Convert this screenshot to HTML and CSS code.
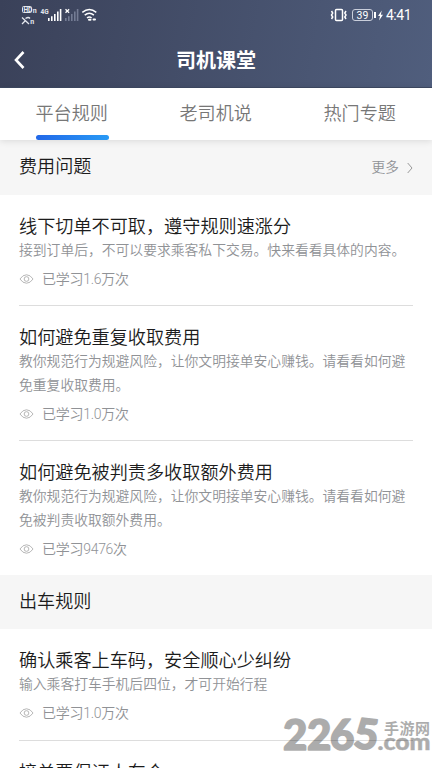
FILE: index.html
```html
<!DOCTYPE html>
<html lang="zh-CN">
<head>
<meta charset="utf-8">
<title>司机课堂</title>
<link rel="stylesheet" href="styles.css">
</head>
<body>
<svg class="defs" width="0" height="0">
  <symbol id="eye" viewBox="0 0 16 12"><path d="M1 6Q4 1.500 8 1.500T15 6Q12 10.500 8 10.500T1 6Z"/><circle cx="8" cy="6" r="2.500"/></symbol>
</svg>
<header class="header">
  <div class="status">
    <svg class="status-left" width="100" height="26" viewBox="0 0 100 26">
      <rect x="22.500" y="6.500" width="9" height="6" rx="1" fill="none" stroke="#e4e7ee"/>
      <text x="23.400" y="12" font-size="6.500" font-weight="700">HD</text>
      <text x="32.800" y="13" font-size="7" font-weight="700">n</text>
      <path d="M22 17.500l7 6.500M22 24l3-3M25.500 18.500q3-2 4.500 0" fill="none" stroke="#e4e7ee" stroke-width="1.300"/>
      <text x="30.300" y="24" font-size="7" font-weight="700">n</text>
      <text x="40.500" y="13.500" font-size="6.500" font-weight="700">4G</text>
      <path d="M48 18h1.600v3H48zM51 16.300h1.600V21H51zM54 14h1.600v7H54zM57 11.500h1.600V21H57zM59.800 9h1.600v12h-1.600z" fill="#fff"/>
      <path d="M65 18h1.600v3H65zM68 16.300h1.600V21H68zM71 14h1.600v7H71zM74 11.500h1.600V21H74zM76.800 9h1.600v12h-1.600z" fill="#747c94"/>
      <path d="M65.500 9.200l3.600 3.600m0-3.600l-3.600 3.600" stroke="#fff" stroke-width="1.300"/>
      <path d="M82.300 12.300q7-5.500 14 0M84.700 15.200q4.600-3.800 9.200 0M87 18q2.300-1.800 4.600 0" fill="none" stroke="#fff" stroke-width="1.500"/>
      <path d="M89 19.800h1.500M93.500 19.500h1.500" stroke="#fff" stroke-width="2" stroke-linecap="round"/>
    </svg>
    <div class="status-right">
      <svg width="18" height="14" viewBox="0 0 18 14" fill="none" stroke="#fff">
        <rect x="5.500" y="1.500" width="7" height="11" rx="1" stroke-width="1.500"/>
        <path d="M1.500 3l1.200 2-1.200 2 1.200 2-1.200 2M16 3l-1.200 2L16 7l-1.200 2L16 11" stroke-width="1.500"/>
      </svg>
      <span class="battery">39</span>
      <svg class="bolt" width="5" height="11" viewBox="0 0 6 12"><path d="M4.500 0L0 6.500h2.400L1.300 12 6 5H3.400z" fill="#fff"/></svg>
      <span class="clock">4:41</span>
    </div>
  </div>
  <div class="navbar">
    <svg class="back" width="12" height="20" viewBox="0 0 12 20"><path d="M10.500 2L3 10l7.500 8" fill="none" stroke="#fff" stroke-width="2.600"/></svg>
    <h1>司机课堂</h1>
  </div>
</header>
<nav class="tabs">
  <a class="tab active">平台规则</a>
  <a class="tab">老司机说</a>
  <a class="tab">热门专题</a>
</nav>
<main>
  <section>
    <div class="section-head">
      <h2>费用问题</h2>
      <span class="more">更多<svg width="6" height="12" viewBox="0 0 6 12"><path d="M.7 1l4.300 5-4.300 5" fill="none" stroke="#999" stroke-width="1"/></svg></span>
    </div>
    <article class="item">
      <h3>线下切单不可取，遵守规则速涨分</h3>
      <p>接到订单后，不可以要求乘客私下交易。快来看看具体的内容。</p>
      <div class="views"><svg><use href="#eye"/></svg>已学习1.6万次</div>
    </article>
    <article class="item">
      <h3>如何避免重复收取费用</h3>
      <p>教你规范行为规避风险，让你文明接单安心赚钱。请看看如何避免重复收取费用。</p>
      <div class="views"><svg><use href="#eye"/></svg>已学习1.0万次</div>
    </article>
    <article class="item">
      <h3>如何避免被判责多收取额外费用</h3>
      <p>教你规范行为规避风险，让你文明接单安心赚钱。请看看如何避免被判责收取额外费用。</p>
      <div class="views"><svg><use href="#eye"/></svg>已学习9476次</div>
    </article>
  </section>
  <section>
    <div class="section-head second"><h2>出车规则</h2></div>
    <article class="item">
      <h3>确认乘客上车码，安全顺心少纠纷</h3>
      <p>输入乘客打车手机后四位，才可开始行程</p>
      <div class="views"><svg><use href="#eye"/></svg>已学习1.0万次</div>
    </article>
    <article class="item">
      <h3>接单要保证人车合</h3>
    </article>
  </section>
</main>
<div class="watermark">
  <svg width="150" height="54" viewBox="0 0 150 54">
    <text class="digits" x="1 25 48 70.500" y="41 41 41 38.500" rotate="0 0 0 7">2265</text>
    <text class="cn" x="102" y="25" textLength="46">手游网</text>
    <text class="com" x="95.500" y="41" textLength="53" lengthAdjust="spacingAndGlyphs">.com</text>
  </svg>
</div>
</body>
</html>
```

FILE: styles.css
```css
* { box-sizing: border-box; }
body {
  margin: 0;
  width: 432px;
  height: 768px;
  overflow: hidden;
  position: relative;
  background: #fff;
  font-family: Roboto, "Noto Sans CJK SC", sans-serif;
}
h1, h2, h3, p { margin: 0; font-weight: 350; }
.defs { position: absolute; }
.header {
  height: 87.500px;
  background: linear-gradient(100deg, #3a4159, #505e7d);
  color: #fff;
  border-bottom: 1px solid #3e4962;
}
.status { height: 30px; display: flex; justify-content: space-between; }
.status-left { fill: #e4e7ee; }
.status-right { display: flex; align-items: center; padding-right: 22px; }
.battery {
  position: relative;
  width: 21px;
  height: 12px;
  margin-left: 4px;
  border: 1px solid #c9cedb;
  border-radius: 3px;
  font-size: 10.500px;
  line-height: 11px;
  text-align: center;
}
.battery::after {
  content: "";
  position: absolute;
  left: 20.500px;
  top: 2px;
  width: 2px;
  height: 6px;
  background: #fff;
}
.bolt { margin: 0 3px 0 5px; }
.clock { font-size: 14px; letter-spacing: -.5px; line-height: 31px; width: 24px; white-space: nowrap; text-align: center; }
.navbar { height: 58px; display: grid; grid-template-columns: 40px 1fr 40px; align-items: center; }
.back { margin-left: 13px; }
h1 { font-size: 20px; line-height: 58px; padding-top: 2px; font-weight: 700; text-align: center; }
.tabs {
  position: relative;
  height: 52.500px;
  display: grid;
  grid-template-columns: repeat(3, 1fr);
  background: #fff;
  box-shadow: 0 1px 7px rgba(0, 0, 0, .12);
}
.tab {
  width: 73px;
  justify-self: center;
  display: flex;
  flex-direction: column;
  justify-content: space-between;
  font-size: 18.100px;
  line-height: 52px;
  height: 52.500px;
  color: #777;
  font-weight: 350;
  white-space: nowrap;
}
.active::after {
  content: "";
  flex: none;
  height: 5px;
  margin-top: -5px;
  border-radius: 3px;
  background: linear-gradient(90deg, #2268e8, #289af5);
}
.section-head {
  height: 54.500px;
  padding: 0 19px;
  display: flex;
  align-items: center;
  justify-content: space-between;
  background: #f6f6f6;
}
.second { height: 54px; }
h2 { font-size: 18.100px; line-height: 26px; color: #1c1c1c; }
.more { display: flex; align-items: center; gap: 8px; font-size: 13.700px; line-height: 20px; padding-bottom: 1px; font-weight: 350; color: #909296; }
.more svg { position: relative; top: 1px; }
.item { margin: 0 19px; padding: 20px 0 16px; border-bottom: 1px solid #ddd; }
h3 { font-size: 18.150px; line-height: 24px; color: #1c1c1c; white-space: nowrap; }
.item p { font-size: 13.800px; line-height: 23.500px; color: #909296; font-weight: 350; }
.views {
  display: flex;
  align-items: center;
  gap: 8px;
  margin-top: 4px;
  height: 23px;
  font-size: 14px;
  letter-spacing: -.28px;
  font-weight: 350;
  color: #909296;
}
.views svg { width: 15px; height: 12px; position: relative; top: 1px; fill: none; stroke: #aaa; stroke-width: .9; }
.item:last-child { border-bottom: 0; }
.watermark { position: absolute; left: 282px; top: 709px; fill: #000; opacity: .32; }
.watermark svg { display: block; }
.digits { font-family: Lato, sans-serif; font-size: 42px; font-weight: 900; stroke: #000; stroke-width: 1.600px; stroke-linejoin: round; }
.cn { font-family: "Noto Sans CJK SC", sans-serif; font-size: 15px; font-weight: 700; }
.com { font-family: Lato, sans-serif; font-size: 22px; font-weight: 900; stroke: #000; stroke-width: .5px; }
```
